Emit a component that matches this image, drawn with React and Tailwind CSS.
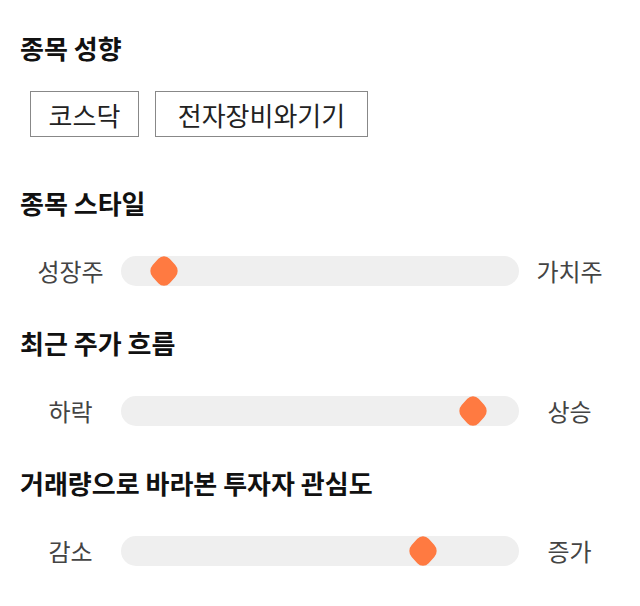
import React from 'react';

const sliders = [
  { title: '종목 스타일', left: '성장주', right: '가치주', pos: 10.8 },
  { title: '최근 주가 흐름', left: '하락', right: '상승', pos: 88.4 },
  { title: '거래량으로 바라본 투자자 관심도', left: '감소', right: '증가', pos: 75.9 },
];

function Heading({ children, className = '' }) {
  return (
    <h2 className={`h-8 text-[26px] leading-8 font-bold text-[#111] ${className}`}>{children}</h2>
  );
}

function SliderRow({ left, right, pos }) {
  return (
    <div className="flex items-center h-[30px]">
      <span className="w-[101px] text-center text-[24px] text-[#444]">{left}</span>
      <div className="relative flex-1 h-[30px] rounded-full bg-[#efefef]">
        {/* thumb */}
        <div
          className="absolute top-1/2 -translate-x-1/2 -translate-y-1/2"
          style={{ left: `${pos}%` }}
        >
          <div className="scale-y-[1.08]">
            <div className="w-[24px] h-[24px] rounded-[8px] bg-[#ff7a41] rotate-45" />
          </div>
        </div>
      </div>
      <span className="w-[101px] text-center text-[24px] text-[#444]">{right}</span>
    </div>
  );
}

export default function App() {
  return (
    <div className="w-[640px] h-[606px] bg-white px-5 pt-8 font-['Noto_Sans_CJK_KR','Noto_Sans',sans-serif]">
      <Heading>종목 성향</Heading>
      <div className="flex gap-4 ml-[10px] mt-[27px]">
        <button className="h-[46px] w-[109px] border border-[#888] text-[26px] text-[#222]">코스닥</button>
        <button className="h-[46px] w-[213px] border border-[#888] text-[26px] text-[#222]">전자장비와기기</button>
      </div>
      {sliders.map((s, i) => (
        <div key={s.title} className={i === 0 ? 'mt-[50px]' : 'mt-[41px]'}>
          <Heading>{s.title}</Heading>
          <div className="mt-[37px]">
            <SliderRow left={s.left} right={s.right} pos={s.pos} />
          </div>
        </div>
      ))}
    </div>
  );
}
